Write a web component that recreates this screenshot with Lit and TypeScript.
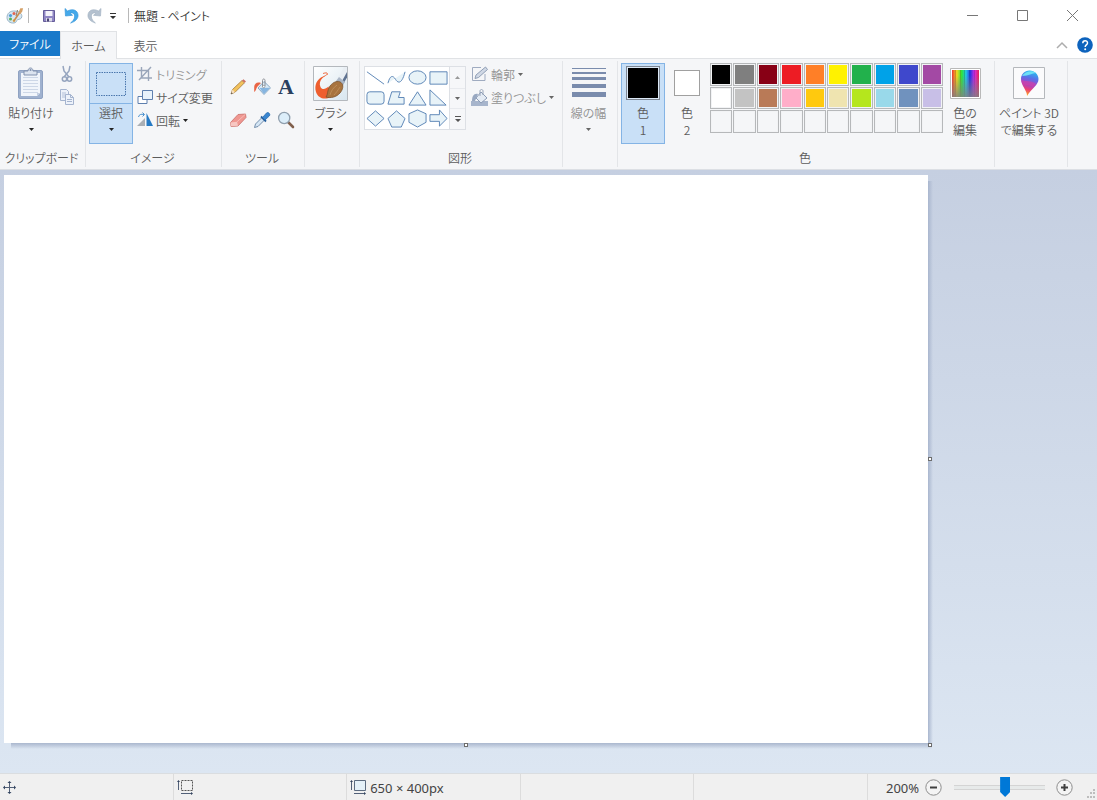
import { LitElement, html, svg, css } from "lit";
import { customElement, state } from "lit/decorators.js";
import { classMap } from "lit/directives/class-map.js";

const palette: string[] = [
  "#000000", "#7f7f7f", "#880015", "#ed1c24", "#ff7f27", "#fff200", "#22b14c", "#00a2e8", "#3f48cc", "#a349a4",
  "#ffffff", "#c3c3c3", "#b97a57", "#ffaec9", "#ffc90e", "#efe4b0", "#b5e61d", "#99d9ea", "#7092be", "#c8bfe7",
  "", "", "", "", "", "", "", "", "", "",
];

const shapes = [
  { name: "直線", draw: svg`<path d="M1 4 19 17"/>` },
  { name: "曲線", draw: svg`<path d="M1 16C3 8 6 7 9 12S16 16 19 4"/>` },
  { name: "楕円", draw: svg`<ellipse cx="10" cy="10" rx="9" ry="7"/>` },
  { name: "四角形", draw: svg`<path d="M1 4h18v13H1z"/>` },
  { name: "角丸四角形", draw: svg`<rect x="1" y="4" width="18" height="13" rx="3"/>` },
  { name: "多角形", draw: svg`<path d="M5 4h9l-2 6h6v7H1z"/>` },
  { name: "三角形", draw: svg`<path d="M10 4 19 18H1z"/>` },
  { name: "直角三角形", draw: svg`<path d="M1 2v16h17z"/>` },
  { name: "ひし形", draw: svg`<path d="m10 2 9 8-9 8-9-8z"/>` },
  { name: "五角形", draw: svg`<path d="m10 2 9 8-4 9H5l-4-9z"/>` },
  { name: "六角形", draw: svg`<path d="m10 1 9 4v9l-9 5-9-5V5z"/>` },
  { name: "右矢印", draw: svg`<path d="M1 6h10V1l8 9-8 8v-5H1z"/>` },
];

const caret = html`<svg class="caret" width="5" height="3" viewBox="0 0 5 3"><path d="M0 0h5L2.500 3z" fill="currentColor"/></svg>`;

const paletteIcon = html`<svg width="18" height="18" viewBox="0 0 18 18">
  <path d="M9 4C4 3.500 1 6.500 1 10.500 1 14 4 16.500 8 16c3-.4 2-2.500 3.500-3.200 2-.8 3.800-.5 4.300-3C16.300 6.500 13 4.200 9 4z" fill="#d6e6f1" stroke="#86a4ba" stroke-width=".8"/>
  <circle cx="4.500" cy="8.500" r="1.600" fill="#4f9ed8"/><circle cx="8" cy="6.500" r="1.500" fill="#e2634e"/>
  <circle cx="4.500" cy="12" r="1.500" fill="#57b05b"/><circle cx="8" cy="13.500" r="1.300" fill="#e8c64d"/>
  <path d="M7.500 14.500 14 5" stroke="#c98b4c" stroke-width="1.600"/><path d="m12.500 5.500 1.800-4.300 2.800 0-.8 3L14.500 7z" fill="#d5a066"/>
  <path d="m10 9 1.500-6" stroke="#8d7a66"/>
</svg>`;

const saveIcon = html`<svg width="14" height="14" viewBox="0 0 14 14">
  <path d="M1.500 1.500h11v11h-11z" fill="#8f86c4" stroke="#655c99"/><path d="M3.500 2h7v5h-7z" fill="#f4f3fa"/>
  <path d="M4 9h6v3.500H4z" fill="#dcdae8"/><path d="M5 9.500h2v3H5z" fill="#4a4474"/></svg>`;

const undoPath = "M1 .500 1.500 8 8.500 7.300 6 5.300C9 4 11 6 10.600 9c-.3 2.500-2 4.400-4 6 5-1.500 7.800-4.500 7.400-8.200C13.500 2 8.500.4 3.600 3z";
const undoIcon = html`<svg width="15" height="16" viewBox="0 0 15 16"><path d=${undoPath} fill="#45a9ea" stroke="#3797da" stroke-width=".7"/></svg>`;
const redoIcon = html`<svg width="15" height="16" viewBox="0 0 15 16"><path transform="matrix(-1 0 0 1 15 0)" d=${undoPath} fill="#b4c1cf" stroke="#a5b4c4" stroke-width=".7"/></svg>`;

const pasteIcon = html`<svg width="28" height="34" viewBox="0 0 28 34">
  <rect x="1.500" y="4.500" width="24" height="28" rx="1.500" fill="#9fb1cf" stroke="#8fa2c2"/>
  <path d="M4 7h19v20l-3 3H4z" fill="#f1f5fb"/><path d="M6 11.500h15M6 14.500h15M6 17.500h15M6 20.500h15M6 23.500h15M6 26.500h15" stroke="#cdd7e7"/>
  <path d="M20 30v-3h3z" fill="#c3cfe2"/>
  <path d="M7 5h4c0-4 5-4 5 0h4v4H7z" fill="#dbe3ef" stroke="#8191ae"/><circle cx="13.500" cy="4" r="1" fill="#8191ae"/></svg>`;

const cutIcon = html`<svg width="14" height="18" viewBox="0 0 14 18" fill="none" stroke="#96a5bf" stroke-width="1.500">
  <path d="m3 1 1 5 5 6M10 1 9 6l-5 6"/><circle cx="4.500" cy="14" r="2.200"/><circle cx="9.500" cy="14" r="2.200"/></svg>`;
const copyIcon = html`<svg width="14" height="16" viewBox="0 0 14 16" fill="#edf2fa" stroke="#a5b4cf">
  <path d="M.5.500h6l2 2v9h-8z"/><path d="M2 4h4M2 6h4M2 8h4" stroke-width=".8"/>
  <path d="M5.500 5.500h5l3 3v7h-8z"/><path d="M10.500 5.500v3h3M7 10.500h5M7 12.500h5" fill="none"/></svg>`;

const selectIcon = html`<svg width="32" height="26" viewBox="0 0 32 26"><path d="M1.500 1.500h29v23h-29z" fill="none" stroke="#4a77ad" stroke-dasharray="1.500 1"/></svg>`;
const cropIcon = html`<svg width="16" height="16" viewBox="0 0 16 16" fill="none" stroke="#9aa6ba" stroke-width="1.400">
  <path d="M4.500 1v11H15M0 4.500h11.500V15M2 14 14 1"/></svg>`;
const resizeIcon = html`<svg width="16" height="16" viewBox="0 0 16 16">
  <path d="M1 7.500h9v7H1z" fill="#fff" stroke="#5e7fae"/><path d="M5.500 1.500h10v9h-10z" fill="#e8f2fb" stroke="#5e7fae"/></svg>`;
const rotateIcon = html`<svg width="16" height="16" viewBox="0 0 16 16">
  <path d="M8 6v8H0z" fill="#aaafb5"/><path d="M9.500 1 16 14H9.500z" fill="#267ac4"/>
  <path d="M1.500 5C2 2.500 4 1.800 7 2.500M5.500.500l2 2-2 2" fill="none" stroke="#4b91ce"/></svg>`;

const pencilIcon = html`<svg width="18" height="18" viewBox="0 0 18 18">
  <path d="m2 16 1.500-4.500L13 2.500l2.500 2.300L6 14.300z" fill="#f2c25c" stroke="#a47a3d" stroke-width=".8"/>
  <path d="m2 16 1.500-4.500L6 14.300z" fill="#f5dec0"/><path d="m2 16 .5-1.700 1.200 1.200z" fill="#444"/>
  <path d="m13 2.500 1.500-1.300 2.500 2.300-1.500 1.300z" fill="#cf7064"/></svg>`;
const fillIcon = html`<svg width="18" height="18" viewBox="0 0 18 18">
  <path d="m11 3.500 6.500 6.300-6.500 6.700-6-6.500z" fill="#d9eaf6" stroke="#7f9fbc" stroke-width=".9"/><path d="m6.500 10 10.500-.2-6 6.200z" fill="#86b5e0"/>
  <path d="M9.500 9V2.500c0-2 2.500-2 2.500 0V8" fill="none" stroke="#8b8e94"/><circle cx="10.700" cy="8.500" r="1.200" fill="#fff" stroke="#7d8289" stroke-width=".7"/>
  <path d="M8 5C4 3.500 1.500 5.500 1.200 9v5C3.500 13 3 9.500 5 8z" fill="#e96545"/></svg>`;
const glyphA = html`<span class="serif-a">A</span>`;
const eraserIcon = html`<svg width="18" height="18" viewBox="0 0 18 18">
  <path d="M1.500 11.500 9 3.500l7.500-.5.500 3.500-8 8.500-7 .5z" fill="#ef9791" stroke="#c96e69" stroke-width=".8"/>
  <path d="m1.500 11.500 6.500-.7L9 14.800 2 15.300z" fill="#f7c7c2"/><path d="m8 10.800 8.500-7.600" stroke="#f7bdb8"/></svg>`;
const dropperIcon = html`<svg width="18" height="18" viewBox="0 0 18 18">
  <path d="m1.500 16.500 1-3.500 6.500-6.500 2.500 2.500L5 15.500z" fill="#d5e6f5" stroke="#6683a4" stroke-width=".9"/>
  <path d="m8 5.500 5 5" stroke="#255f9f" stroke-width="1.800"/><path d="M9.500 6.500 13.500 2C15 .6 18 3 16.300 5L12 9z" fill="#3a86d0" stroke="#2b6cb0" stroke-width=".8"/></svg>`;
const zoomIcon = html`<svg width="18" height="18" viewBox="0 0 18 18">
  <path d="m11 11 5 5" stroke="#80604c" stroke-width="2.600" stroke-linecap="round"/>
  <circle cx="7.200" cy="7" r="5.600" fill="#dceefa" stroke="#8f9fae" stroke-width="1.300"/></svg>`;

const brushIcon = html`<svg width="35" height="35" viewBox="0 0 35 35">
  <defs><linearGradient id="bg" x1="0" y1="0" x2="1" y2="1"><stop offset="0" stop-color="#fff"/><stop offset="1" stop-color="#d8e6ef"/></linearGradient></defs>
  <path d="M.5.500h34v34H.5z" fill="url(#bg)" stroke="#b4b8bd"/>
  <path d="M25 12 31 1h3v9l-5 7z" fill="#e9eef3"/><path d="M28.500 16 34 6v5.500l-4 7z" fill="#5f7290"/>
  <path d="m23 15 3-4 6 5-3 5z" fill="#aab6c6"/>
  <path d="M14.500 7.500C15 9 12 10 9.500 12 7 14.500 6 18 7.500 21c1.500 3 5 2.500 8-.5L18 31c-7 3.500-13 1-15-5-2-7 1-13 7-15.500C12 9.500 13 9 14.500 7.500z" fill="#ee5e2e"/>
  <path d="M14.500 8.500C14.500 6 12 7 10 7.500" stroke="#ee5e2e" fill="none"/>
  <path d="M13 31c2-2 1-7 4-11 3-4 8-6 11-3.500s2 7-1 10.500c-3.500 4-9 5.500-14 4z" fill="#a8743f" stroke="#7b532d" stroke-width=".8"/>
  <path d="M17 29c1-4 3-7 7-10M21 29c2-2 4-5 6-8" stroke="#c2935e" fill="none" stroke-width=".8"/></svg>`;

const outlineIcon = html`<svg width="17" height="16" viewBox="0 0 17 16">
  <path d="M10 1.500H1.500v13H14V8" fill="none" stroke="#9fabc0"/><path d="m4 12.500 1-3.500 9.500-8 2 2.500-9 8z" fill="#d0d8e5" stroke="#8796af" stroke-width=".9"/></svg>`;
const shapeFillIcon = html`<svg width="17" height="17" viewBox="0 0 17 17">
  <path d="M0 12h17v5H0z" fill="#a7b5cc"/><path d="m10 3 6 6-6 5-5-5z" fill="#e4ebf4" stroke="#8b9bb5"/>
  <path d="M9 7V2c0-2 3-2 3 0v4" fill="none" stroke="#97a4b8"/><path d="M7 5C3 4 1 7 1 12h3z" fill="#98a8c1"/></svg>`;
const lineWidthIcon = html`<svg width="34" height="30" viewBox="0 0 34 30" fill="#7a8cad">
  <path d="M0 0h34v1H0zM0 4h34v2H0zM0 9h34v3H0zM0 16h34v4H0zM0 24h34v5H0z"/></svg>`;

const spectrumIcon = html`<svg width="31" height="31" viewBox="0 0 31 31">
  <defs>
    <linearGradient id="hue"><stop offset="0" stop-color="#e33"/><stop offset=".18" stop-color="#f4d91f"/><stop offset=".36" stop-color="#2be33a"/><stop offset=".52" stop-color="#22c9e6"/><stop offset=".68" stop-color="#2b33e6"/><stop offset=".84" stop-color="#d62be0"/><stop offset="1" stop-color="#e32552"/></linearGradient>
    <linearGradient id="dim" x2="0" y2="1"><stop offset=".2" stop-color="#808080" stop-opacity="0"/><stop offset="1" stop-color="#808080" stop-opacity=".85"/></linearGradient>
  </defs>
  <path d="M.5.500h30v30H.5z" fill="#fff" stroke="#b9b9b9"/><path d="M2 2h27v27H2z" fill="url(#hue)"/>
  <path d="M5.500 2v27M10.500 2v27M14.500 2v27M19.500 2v27M24.500 2v27" stroke="#000" stroke-opacity=".16"/><path d="M2 2h27v27H2z" fill="url(#dim)"/></svg>`;

const paint3dIcon = html`<svg width="32" height="32" viewBox="0 0 32 32">
  <defs><linearGradient id="drop" x1=".6" y1="0" x2=".4" y2="1"><stop offset="0" stop-color="#22c3f0"/><stop offset=".3" stop-color="#5a70e8"/><stop offset=".55" stop-color="#a344c9"/><stop offset=".75" stop-color="#ea3f77"/><stop offset="1" stop-color="#ffb11b"/></linearGradient></defs>
  <path d="M.5.500h31v31H.5z" fill="#fbfbfc" stroke="#b5b8bc"/>
  <path d="M16.500 3.500c5 0 9 3.700 9 8.500 0 6-6.500 9-11.500 17 .5-5-6-10.500-6-17 0-4.800 3.700-8.500 8.500-8.500z" fill="url(#drop)"/>
  <path d="M9 9c3-5 10-6 14-3-4 0-7 3-14 3z" fill="#6de0f5"/><path d="M8.200 13c5 2 10 0 15 4l-3 3c-4-3-8-1-11-3z" fill="#df3f9c" opacity=".55"/></svg>`;

@customElement("app-root")
export class AppRoot extends LitElement {
  @state() private tab = "ホーム";
  @state() private zoom = 57;

  static styles = css`
    :host {
      display: flex; flex-direction: column; height: 100vh; overflow: hidden;
      font: 12px/17px "Noto Sans CJK JP", "Noto Sans", sans-serif;
      font-feature-settings: "palt"; font-weight: 350;
      color: #5c5c5c; background: #fff;
    }
    *, *::before, *::after { box-sizing: border-box; }
    button { font: inherit; font-feature-settings: inherit; color: inherit; background: none; border: 0; padding: 0; margin: 0; white-space: nowrap; }
    svg { display: block; flex: none; }

    .titlebar { display: flex; align-items: center; height: 31px; flex: none; padding-left: 6px; }
    .quick { display: flex; align-items: center; }
    .quick button { width: 23px; height: 24px; display: grid; place-items: center; }
    .quick .more { width: 14px; color: #333; }
    .bar { width: 1px; height: 15px; background: #b8b8b8; }
    .quick .bar { margin-left: 4px; margin-right: 8px; }
    .title { font-size: 12px; font-weight: 350; color: #333; margin: 0; padding-left: 5px; flex: 1; }
    .after { margin-left: 8px; }
    .caption { display: flex; }
    .caption button { width: 50px; height: 31px; display: grid; place-items: center; }

    .tabs { display: flex; height: 28px; flex: none; border-bottom: 1px solid #e0e2e5; }
    .tab { width: 57px; height: 28px; line-height: 26px; border: 1px solid transparent; border-bottom: 0; }
    .tab.active { background: #f5f6f8; border-color: #e0e2e5; }
    .file { width: 60px; height: 25px; background: #1979ca; color: #fff; }
    .tools-right { margin-left: auto; display: flex; align-items: center; gap: 9px; padding-right: 4px; }

    .ribbon { display: flex; height: 111px; flex: none; background: #f5f6f8; border-bottom: 1px solid #dcdfe4; padding: 2px 0; overflow: hidden; }
    .group { display: flex; flex-direction: column; flex: none; border-right: 1px solid #e3e5e8; padding: 2px 3px 1px; }
    .content { display: flex; flex: 1; }
    .legend { text-align: center; height: 17px; white-space: nowrap; padding-right: 2px; }
    .clip { width: 86px; } .image { width: 136px; } .tools { width: 83px; } .brushes { width: 55px; padding-left: 0; }
    .shapes { width: 203px; } .width { width: 55px; padding-left: 0; } .colors { width: 377px; } .paint3d { width: 73px; padding-left: 1px; }

    .big { display: flex; flex-direction: column; align-items: center; width: 44px; height: 81px; border: 1px solid transparent; }
    .big .pic { display: grid; place-items: center; height: 40px; flex: none; padding-bottom: 2px; }
    .big .caret { margin-top: 7px; }
    .big .text { white-space: pre; }
    .big.on { background: #c9e0f7; border-color: #84b4e5; }
    .big.split .pic { width: 100%; border-bottom: 1px solid #84b4e5; padding-bottom: 0; }
    .wide { width: 56px; }
    .full { width: 66px; }
    .caret { color: #222; }
    .off { color: #929292; }
    .off .caret { color: #666; }

    .stack { display: flex; flex-direction: column; gap: 1px; }
    .row { display: flex; align-items: center; gap: 3px; height: 22px; }
    .image .stack { padding-left: 4px; }
    .clip .stack { padding-left: 1px; }
    .toolgrid { display: grid; grid-template-columns: repeat(3, 24px); grid-auto-rows: 33px; justify-content: center; width: 100%; padding: 7px 2px 0 0; }
    .toolgrid button { display: grid; place-items: center; }
    .serif-a { font: bold 22px/22px "Liberation Serif", serif; color: #29405f; }

    .gallery { display: flex; width: 102px; height: 64px; margin: 3px 5px 0 1px; border: 1px solid #dde0e5; background: #fff; }
    .cells { display: grid; grid-template: repeat(3, 1fr) / repeat(4, 1fr); flex: 1; }
    .cells button { display: grid; place-items: center; }
    .cells svg { fill: #e8f3f8; stroke: #5a84b5; stroke-width: 1; }
    .scroll { display: grid; grid-template-rows: repeat(3, 1fr); width: 16px; border-left: 1px solid #dde0e5; background: #f6f7f9; }
    .scroll button { display: grid; place-items: center; }
    .scroll button + button { border-top: 1px solid #e8eaee; }

    .chip { display: block; border: 1px solid #a0a0a0; background: #fff; }
    .primary { width: 34px; height: 34px; border-color: #7e8794; background: #000; box-shadow: inset 0 0 0 1px #dce9f7; }
    .secondary { width: 26px; height: 26px; }
    .swatches { display: grid; grid-template-columns: repeat(10, 1fr); gap: 1px; width: 233px; height: 70px; margin: 0 0 0 1px; }
    .swatches button { border: 1px solid #b6b8ba; box-shadow: inset 0 0 0 1px #f2f3f5; }

    .workspace { flex: 1; min-height: 0; display: flex; padding: 5px 169px 30px 4px; background: linear-gradient(#c5cfe1, #dce6f2); }
    .canvas { flex: 1; background: #fff; position: relative; }
    .canvas::before { content: ""; position: absolute; left: 7px; right: -4px; top: 100%; height: 6px; background: linear-gradient(#aab7ce, #aab7ce00); }
    .canvas::after { content: ""; position: absolute; top: 6px; bottom: -3px; left: 100%; width: 5px; background: linear-gradient(to right, #a9b6ce, #a9b6ce00); }
    .handle { position: absolute; z-index: 1; width: 4px; height: 4px; border: 1px solid #6d6d6d; background: #fff; }
    .e { left: 100%; top: 50%; margin-top: -2px; } .s { left: 50%; top: 100%; margin-left: -2px; } .se { left: 100%; top: 100%; }

    .status { display: flex; height: 27px; flex: none; background: #f0f0f0; border-top: 1px solid #dadde0; font: 12px/17px "Noto Sans", sans-serif; font-size: 13px; color: #444; }
    .cell { flex: 1; display: flex; align-items: center; gap: 4px; border-right: 1px solid #dcdcdc; padding-left: 3px; }
    .cell span, .zoombar output { padding-top: 2px; }
    .zoombar { width: 229px; display: flex; align-items: center; padding-left: 18px; position: relative; }
    .zoombar output { width: 39px; }
    .zoombar input { appearance: none; width: 91px; height: 20px; margin: 0 11px 0 12px; background: linear-gradient(#d4d4d4 1px, #e7eaea 1px 4px, #d4d4d4 4px) center / 100% 5px no-repeat; }
    .zoombar input::-webkit-slider-thumb { appearance: none; width: 10px; height: 20px; background: #0078d7; clip-path: polygon(0 0, 100% 0, 100% 75%, 50% 100%, 0 75%); }
    .grip { position: absolute; right: 1px; bottom: 1px; }
  `;

  private big(icon: unknown, label: string, cls = "", arrow = false) {
    return html`<button class="big ${cls}"><span class="pic">${icon}</span><span class="text">${label}</span>${arrow ? caret : ""}</button>`;
  }

  private row(icon: unknown, label: string, arrow = false, off = false) {
    return html`<button class=${classMap({ row: true, off })}>${icon}<span>${label}</span>${arrow ? caret : ""}</button>`;
  }

  private zoomButton(label: string, d: string, step: number) {
    return html`<button aria-label=${label} @click=${() => (this.zoom = Math.max(0, Math.min(100, this.zoom + step)))}>
      <svg width="17" height="17" viewBox="0 0 17 17"><circle cx="8.500" cy="8.500" r="7.700" fill="#f4f4f4" stroke="#8e8e8e"/><path d=${d} stroke="#404040" stroke-width="2"/></svg>
    </button>`;
  }

  render() {
    return html`
      <header class="titlebar">
        <div class="quick">
          ${paletteIcon}<span class="bar"></span>
          <button aria-label="上書き保存">${saveIcon}</button>
          <button aria-label="元に戻す">${undoIcon}</button>
          <button aria-label="やり直し">${redoIcon}</button>
          <button class="more" aria-label="クイック アクセスのカスタマイズ"><svg width="6" height="6" viewBox="0 0 6 6"><path d="M0 0h6v1H0zM0 3h6L3 6z" fill="currentColor"/></svg></button>
        </div>
        <span class="bar after"></span>
        <h1 class="title">無題 - ペイント</h1>
        <div class="caption">
          <button aria-label="最小化"><svg width="11" height="11" viewBox="0 0 11 11"><path d="M0 5.500h11" stroke="#777"/></svg></button>
          <button aria-label="最大化"><svg width="11" height="11" viewBox="0 0 11 11"><path d="M.5.500h10v10H.5z" fill="none" stroke="#777"/></svg></button>
          <button aria-label="閉じる"><svg width="11" height="11" viewBox="0 0 11 11"><path d="m0 0 11 11M11 0 0 11" stroke="#777"/></svg></button>
        </div>
      </header>

      <nav class="tabs">
        <button class="file">ファイル</button>
        ${["ホーム", "表示"].map((name) => html`<button class=${classMap({ tab: true, active: this.tab === name })} @click=${() => (this.tab = name)}>${name}</button>`)}
        <div class="tools-right">
          <button aria-label="リボンの最小化"><svg width="12" height="8" viewBox="0 0 12 8"><path d="m1 7 5-5 5 5" fill="none" stroke="#adadad" stroke-width="1.500"/></svg></button>
          <button aria-label="ヘルプ"><svg width="16" height="16" viewBox="0 0 16 16"><circle cx="8" cy="8" r="7.800" fill="#0d63bd"/><path d="M5.800 6.200c0-3.300 4.700-3.200 4.700-.3 0 2-2.300 2-2.300 4" fill="none" stroke="#fff" stroke-width="1.500"/><circle cx="8.200" cy="12.200" r="1" fill="#fff"/></svg></button>
        </div>
      </nav>

      <section class="ribbon">
        <div class="group clip">
          <div class="content">
            ${this.big(pasteIcon, "貼り付け", "wide", true)}
            <div class="stack">
              <button class="row" aria-label="切り取り">${cutIcon}</button>
              <button class="row" aria-label="コピー">${copyIcon}</button>
            </div>
          </div>
          <div class="legend">クリップボード</div>
        </div>
        <div class="group image">
          <div class="content">
            ${this.big(selectIcon, "選択", "on split", true)}
            <div class="stack">
              ${this.row(cropIcon, "トリミング", false, true)}
              ${this.row(resizeIcon, "サイズ変更")}
              ${this.row(rotateIcon, "回転", true)}
            </div>
          </div>
          <div class="legend">イメージ</div>
        </div>
        <div class="group tools">
          <div class="content">
            <div class="toolgrid">
              <button aria-label="鉛筆">${pencilIcon}</button>
              <button aria-label="塗りつぶし">${fillIcon}</button>
              <button aria-label="テキスト">${glyphA}</button>
              <button aria-label="消しゴム">${eraserIcon}</button>
              <button aria-label="色の選択">${dropperIcon}</button>
              <button aria-label="拡大鏡">${zoomIcon}</button>
            </div>
          </div>
          <div class="legend">ツール</div>
        </div>
        <div class="group brushes"><div class="content">${this.big(brushIcon, "ブラシ", "wide", true)}</div></div>
        <div class="group shapes">
          <div class="content">
            <div class="gallery">
              <div class="cells">
                ${shapes.map((s) => html`<button aria-label=${s.name}><svg width="19" height="19" viewBox="0 0 20 20">${s.draw}</svg></button>`)}
              </div>
              <div class="scroll">
                <button aria-label="上へ" class="off"><svg width="5" height="3" viewBox="0 0 5 3"><path d="M0 3h5L2.500 0z" fill="#999"/></svg></button>
                <button aria-label="下へ" class="off">${caret}</button>
                <button aria-label="その他"><svg width="6" height="6" viewBox="0 0 6 6"><path d="M0 0h6v1H0zM0 3h6L3 6z" fill="#555"/></svg></button>
              </div>
            </div>
            <div class="stack">
              ${this.row(outlineIcon, "輪郭", true, true)}
              ${this.row(shapeFillIcon, "塗りつぶし", true, true)}
            </div>
          </div>
          <div class="legend">図形</div>
        </div>
        <div class="group width"><div class="content">${this.big(lineWidthIcon, "線の幅", "wide off", true)}</div></div>
        <div class="group colors">
          <div class="content">
            ${this.big(html`<span class="chip primary"></span>`, "色\n1", "on")}
            ${this.big(html`<span class="chip secondary"></span>`, "色\n2")}
            <div class="swatches">
              ${palette.map((c) => html`<button aria-label=${c || "空き"} style=${c ? `background:${c}` : ""}></button>`)}
            </div>
            ${this.big(spectrumIcon, "色の\n編集")}
          </div>
          <div class="legend">色</div>
        </div>
        <div class="group paint3d"><div class="content">${this.big(paint3dIcon, "ペイント 3D\nで編集する", "full")}</div></div>
      </section>

      <main class="workspace">
        <div class="canvas"><span class="handle e"></span><span class="handle s"></span><span class="handle se"></span></div>
      </main>

      <footer class="status">
        <div class="cell"><svg width="13" height="13" viewBox="0 0 13 13"><path d="M6.500 1v11M1 6.500h11" stroke="#526078"/><path d="m6.500 0 2 2h-4zM6.500 13l2-2h-4zM0 6.500l2-2v4zM13 6.500l-2-2v4z" fill="#33445f"/></svg></div>
        <div class="cell"><svg width="16" height="15" viewBox="0 0 16 15"><path d="M4.500.500h11v10h-11z" fill="none" stroke="#555" stroke-dasharray="2 1"/><path d="M1.500 1v9M4 13.500h11" stroke="#526078"/><path d="m1.500 0 1.500 2H0zM16 13.500 14 12v3z" fill="#33445f"/></svg></div>
        <div class="cell"><svg width="16" height="15" viewBox="0 0 16 15"><path d="M4.500.500h11v10h-11z" fill="#e4f0f8" stroke="#5c6b80"/><path d="M1.500 1v9M4 13.500h11" stroke="#526078"/><path d="m1.500 0 1.500 2H0zM16 13.500 14 12v3z" fill="#33445f"/></svg><span>650 × 400px</span></div>
        <div class="cell"></div>
        <div class="cell"></div>
        <div class="zoombar">
          <output for="zoom">200%</output>
          ${this.zoomButton("縮小", "M5 8.500h7", -10)}
          <input id="zoom" type="range" aria-label="ズーム" min="0" max="100" .value=${String(this.zoom)} @input=${(e: Event) => (this.zoom = Number((e.target as HTMLInputElement).value))}>
          ${this.zoomButton("拡大", "M5 8.500h7M8.500 5v7", 10)}
          <svg class="grip" width="10" height="10" viewBox="0 0 10 10"><path d="M7 0h2v2H7zM7 3h2v2H7zM4 3h2v2H4zM7 7h2v2H7zM4 7h2v2H4zM1 7h2v2H1z" fill="#bdbdbd"/></svg>
        </div>
      </footer>
    `;
  }
}
